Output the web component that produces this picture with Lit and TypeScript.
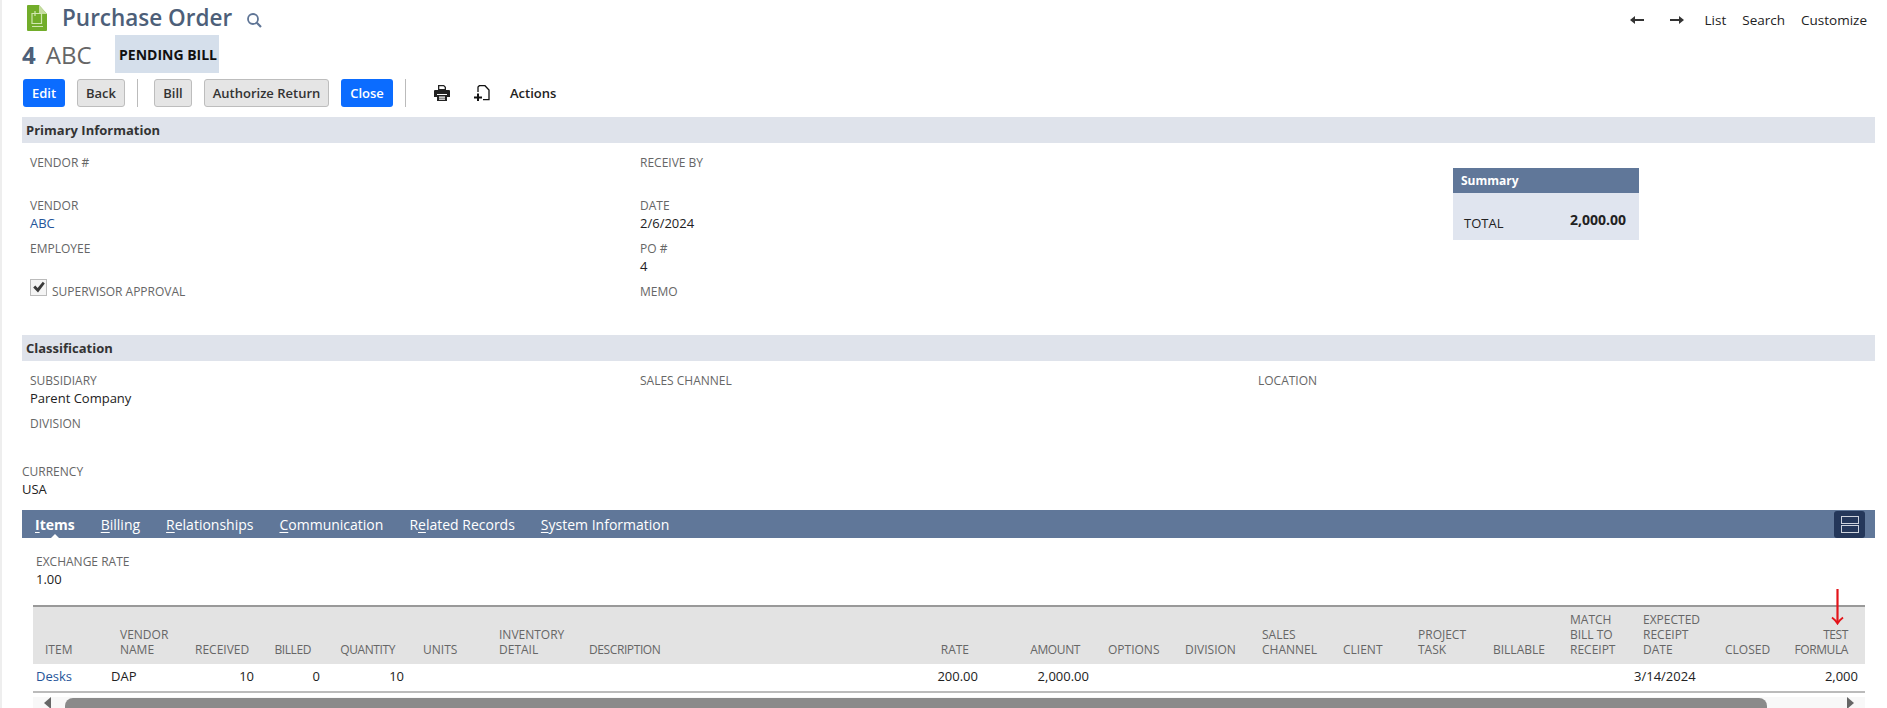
import { LitElement, html, css } from "lit";
import { customElement } from "lit/decorators.js";

const cols: [string, number, "l" | "r", string, string, string][] = [
  ["ITEM", 75, "l", "Desks", "link", ""],
  ["VENDOR<br>NAME", 75, "l", "DAP", "", ""],
  ["RECEIVED", 74, "r", "10", "", ""],
  ["BILLED", 66, "r", "0", "", "tight"],
  ["QUANTITY", 84, "r", "10", "", "tight"],
  ["UNITS", 80, "l", "", "", "wide"],
  ["INVENTORY<br>DETAIL", 90, "l", "", "", ""],
  ["DESCRIPTION", 323, "l", "", "", "tight"],
  ["RATE", 81, "r", "200.00", "", ""],
  ["AMOUNT", 111, "r", "2,000.00", "", "tight"],
  ["OPTIONS", 81, "l", "", "", "wide"],
  ["DIVISION", 77, "l", "", "", ""],
  ["SALES<br>CHANNEL", 81, "l", "", "", ""],
  ["CLIENT", 75, "l", "", "", ""],
  ["PROJECT<br>TASK", 75, "l", "", "", ""],
  ["BILLABLE", 77, "l", "", "", ""],
  ["MATCH<br>BILL TO<br>RECEIPT", 73, "l", "", "", ""],
  ["EXPECTED<br>RECEIPT<br>DATE", 82, "l", "3/14/2024", "date", ""],
  ["CLOSED", 72, "l", "", "", ""],
  ["TEST<br>FORMULA", 80, "r", "2,000", "last", "last tight"],
];

@customElement("app-root")
export class AppRoot extends LitElement {
  static styles = css`
    :host {
      display: block;
      height: 708px;
      overflow: hidden;
      background: #fff;
      font-family: "Open Sans", sans-serif;
      font-size: 13px;
      color: #222;
      position: relative;
    }
    .page { border-left: 2px solid #eeeeee; padding-left: 20px; padding-right: 12px; height: 708px; }
    .title-row { display: flex; align-items: center; height: 35px; }
    .doc { margin: 0 15px 0 5px; width: 20px; height: 26px; flex: none; }
    h1 { margin: 0; font-size: 22.5px; line-height: 35px; font-weight: 600; color: #4d5f79; }
    .mag { margin-left: 15px; width: 15px; height: 15px; flex: none; margin-top: 6px; }
    .nav { margin-left: auto; display: flex; align-items: center; padding-right: 8px; color: #222; height: 40px; margin-top: 5px; font-size: 13.5px; }
    .nav span { margin-left: 16px; }
    .nav svg { display: block; }
    .nav .gap { margin-left: 26px; }
    .nav .list { margin-left: 21px; }
    .rec { display: flex; height: 38px; }
    .rec-id { display: flex; align-items: center; font-size: 24px; color: #666; width: 93px; }
    .rec-id b { color: #4d5f79; margin-right: 10px; font-weight: 700; }
    .badge { background: #d5dfeb; display: flex; align-items: center; padding: 0 4px; font-weight: 700; font-size: 14px; color: #111; width: 104px; box-sizing: border-box; white-space: nowrap; }
    .bar { display: flex; align-items: center; height: 28px; margin: 6px 0 10px; padding-left: 1px; }
    .btn { height: 28px; box-sizing: border-box; border-radius: 3px; display: flex; align-items: center; justify-content: center; font-weight: 600; font-size: 13px; }
    .pri { background: #0b6cff; color: #fff; }
    .sec { background: #e5e5e5; border: 1px solid #bdbdbd; color: #333; }
    .sep { width: 1px; height: 28px; background: #bbb; }
    .act { margin-left: 20px; font-weight: 600; color: #222; }
    .band { height: 26px; background: #dfe3eb; display: flex; align-items: center; padding-left: 4px; font-weight: 700; font-size: 13px; color: #333; }
    .primary { display: grid; grid-template-columns: 610px 813px 186px; grid-template-rows: 43px 43px 43px; height: 181px; padding: 11px 0 0 8px; }
    .cls { display: grid; grid-template-columns: 610px 618px 1fr; grid-template-rows: 43px; height: 90px; padding: 11px 0 0 8px; }
    .f { line-height: 18px; }
    .l { font-size: 12px; color: #666; line-height: 18px; white-space: nowrap; }
    .v { line-height: 18px; font-size: 13px; color: #222; margin-top: -1px; }
    .link { color: #255599; }
    .chk { display: flex; align-items: flex-start; }
    .box { width: 15px; height: 15px; border: 1px solid #bbb; background: #f4f4f4; margin: -4px 5px 0 0; flex: none; display: flex; }
    .summary { grid-column: 3; grid-row: 1 / span 3; align-self: start; margin-top: 14px; width: 186px; }
    .sum-h { height: 25px; background: #607799; color: #fff; font-weight: 700; font-size: 12px; display: flex; align-items: center; padding-left: 8px; }
    .sum-b { height: 47px; background: #e0e5ef; display: flex; justify-content: space-between; box-sizing: border-box; padding: 18px 13px 0 11px; }
    .sum-b span { font-size: 13px; line-height: 24px; }
    .sum-b b { font-size: 14px; line-height: 18px; color: #222; }
    .cur { height: 48px; box-sizing: border-box; padding-top: 1px; }
    .tabs { height: 28px; background: #607799; display: flex; align-items: center; padding-left: 13px; color: #fff; font-size: 14px; position: relative; }
    .tabs span { margin-right: 26px; white-space: nowrap; position: relative; }
    .tabs .on { font-weight: 700; }
    .tabs .on::after { content: ""; position: absolute; left: 50%; margin-left: -5px; bottom: -5px; border: 5px solid transparent; border-top: 0; border-bottom-color: #fff; }
    .tabs u { text-underline-offset: 2px; }
    .split { position: absolute; right: 10px; top: 1px; width: 31px; height: 27px; background: #24375a; border-radius: 3px; display: flex; align-items: center; justify-content: center; }
    .ex { padding: 15px 0 0 14px; height: 52px; }
    .tw { margin-left: 11px; width: 1832px; position: relative; }
    table { border-collapse: collapse; table-layout: fixed; width: 1832px; }
    th { background: #e3e3e3; font-weight: 400; font-size: 12px; color: #666; line-height: 15px; vertical-align: bottom; text-align: left; padding: 0 12px 7px; height: 58px; box-sizing: border-box; white-space: nowrap; border-top: 2px solid #999; }
    th.r { text-align: right; }
    th.wide { padding-left: 16px; }
    th.tight { letter-spacing: -0.4px; }
    th.last { padding: 0 17px 7px 0; }
    td { height: 28px; box-sizing: border-box; padding: 0 3px 4px; font-size: 13px; border-bottom: 2px solid #bbb; white-space: nowrap; }
    td.r { text-align: right; }
    td.date { text-align: right; padding-right: 18px; }
    td.last { padding-right: 7px; }
    .scroll { margin-top: 4px; height: 13px; background: #f8f8f8; display: flex; align-items: center; position: relative; overflow: hidden; }
    .thumb { margin-left: 32px; width: 1702px; height: 24px; margin-top: 12px; border-radius: 8px; background: #8a8a8a; }
    .ar { position: absolute; top: 0; }
    .red { position: absolute; left: 1798px; top: -16px; }
  `;

  private doc() {
    return html`<svg class="doc" viewBox="0 0 20 26">
      <path d="M1 0H12L20 9V25a1 1 0 0 1-1 1H1a1 1 0 0 1-1-1V1a1 1 0 0 1 1-1Z" fill="#72ad2a"/>
      <path d="M12 0L20 9H12Z" fill="#c5dca0"/>
      <path d="M5 8.5H14.5V18.5H5Z M8 6V11 M5 21.5H16" fill="none" stroke="#cfe6b0" stroke-width="1.2"/>
    </svg>`;
  }

  render() {
    const f = (l: string, v?: unknown, c = "") => html`<div class="f"><div class="l">${l}</div>${v ? html`<div class="v ${c}">${v}</div>` : ""}</div>`;
    return html`<div class="page">
      <div class="title-row">
        ${this.doc()}
        <h1>Purchase Order</h1>
        <svg class="mag" viewBox="0 0 15 15" fill="none" stroke="#5f7596"><circle cx="6" cy="6" r="5" stroke-width="1.8"/><path d="M9.8 9.8L14 14" stroke-width="2.2"/></svg>
        <div class="nav">
          <svg width="14" height="10" viewBox="0 0 14 10"><path d="M0 5L5 1V4H14V6H5V9Z" fill="#333"/></svg>
          <svg class="gap" width="14" height="10" viewBox="0 0 14 10"><path d="M14 5L9 1V4H0V6H9V9Z" fill="#333"/></svg>
          <span class="list">List</span><span>Search</span><span>Customize</span>
        </div>
      </div>
      <div class="rec">
        <div class="rec-id"><b>4</b>ABC</div>
        <div class="badge">PENDING BILL</div>
      </div>
      <div class="bar">
        <div class="btn pri" style="width:42px">Edit</div>
        <div class="btn sec" style="width:48px;margin-left:12px">Back</div>
        <div class="sep" style="margin-left:12px"></div>
        <div class="btn sec" style="width:38px;margin-left:16px">Bill</div>
        <div class="btn sec" style="width:125px;margin-left:12px">Authorize Return</div>
        <div class="btn pri" style="width:52px;margin-left:12px">Close</div>
        <div class="sep" style="margin-left:12px"></div>
        <svg style="margin-left:28px" width="16" height="16" viewBox="0 0 16 16"><path d="M4 0H10L12 2V5H4Z M5.3 1.3V4H10.7V2.5L9.5 1.3Z" fill="#222" fill-rule="evenodd"/><path d="M1 5H15a1 1 0 0 1 1 1V12H13V9H3V12H0V6a1 1 0 0 1 1-1Z" fill="#222"/><path d="M3 10H13V16H3Z M5 11.5V12.7H11V11.5Z M5 13.5V14.7H11V13.5Z" fill="#222" fill-rule="evenodd"/></svg>
        <svg style="margin-left:24px" width="16" height="16" viewBox="0 0 16 16" fill="none" stroke="#111" stroke-width="1.3"><path d="M4 7V2L5.3.7H11L15 5V14.7H9"/><path d="M0 12.5H8M4 8.5V16" stroke-width="2"/></svg>
        <span class="act">Actions</span>
      </div>
      <div class="band">Primary Information</div>
      <div class="primary">
        ${f("VENDOR #")}${f("RECEIVE BY")}
        <div class="summary">
          <div class="sum-h">Summary</div>
          <div class="sum-b"><span>TOTAL</span><b>2,000.00</b></div>
        </div>
        ${f("VENDOR", "ABC", "link")}${f("DATE", "2/6/2024")}
        ${f("EMPLOYEE")}${f("PO #", "4")}
        <div class="chk"><div class="box"><svg width="15" height="15" viewBox="0 0 15 15"><path d="M2.2 7.6L4.3 5.6L6.6 8L11.8 1.8L13.8 3.4L7 12.4Z" fill="#3a3a3a"/></svg></div><div class="l">SUPERVISOR APPROVAL</div></div>
        ${f("MEMO")}
      </div>
      <div class="band">Classification</div>
      <div class="cls">
        ${f("SUBSIDIARY", "Parent Company")}${f("SALES CHANNEL")}${f("LOCATION")}
        ${f("DIVISION")}
      </div>
      <div class="cur">${f("CURRENCY", "USA")}</div>
      <div class="tabs">
        <span class="on"><u>I</u>tems</span>
        <span><u>B</u>illing</span>
        <span><u>R</u>elationships</span>
        <span><u>C</u>ommunication</span>
        <span>R<u>e</u>lated Records</span>
        <span><u>S</u>ystem Information</span>
        <div class="split"><svg width="18" height="17" viewBox="0 0 18 17" fill="none" stroke="#cdd3dd"><rect x=".5" y=".5" width="17" height="7"/><rect x=".5" y="9.5" width="17" height="7"/></svg></div>
      </div>
      <div class="ex">${f("EXCHANGE RATE", "1.00")}</div>
      <div class="tw">
        <table>
          <colgroup>${cols.map((c) => html`<col style="width:${c[1]}px">`)}</colgroup>
          <thead><tr>${cols.map((c) => html`<th class="${c[2] === "r" ? "r" : ""} ${c[5]}" .innerHTML=${c[0]}></th>`)}</tr></thead>
          <tbody><tr>${cols.map((c) => html`<td class="${c[2] === "r" ? "r" : ""} ${c[4]}">${c[3]}</td>`)}</tr></tbody>
        </table>
        <div class="scroll">
          <svg class="ar" style="left:11px" width="8" height="12" viewBox="0 0 8 12"><path d="M7 0L0 6L7 12Z" fill="#666"/></svg>
          <div class="thumb"></div>
          <svg class="ar" style="left:1814px" width="8" height="12" viewBox="0 0 8 12"><path d="M0 0L7 6L0 12Z" fill="#666"/></svg>
        </div>
        <svg class="red" width="14" height="36" viewBox="0 0 14 36" fill="none" stroke="#e3141a" stroke-width="2.2"><path d="M6.5 0V33"/><path d="M1 28.5C3 30 5 32 6.5 34.5C8 32 10 30 12 28.5" stroke-width="1.9"/></svg>
      </div>
    </div>`;
  }
}
